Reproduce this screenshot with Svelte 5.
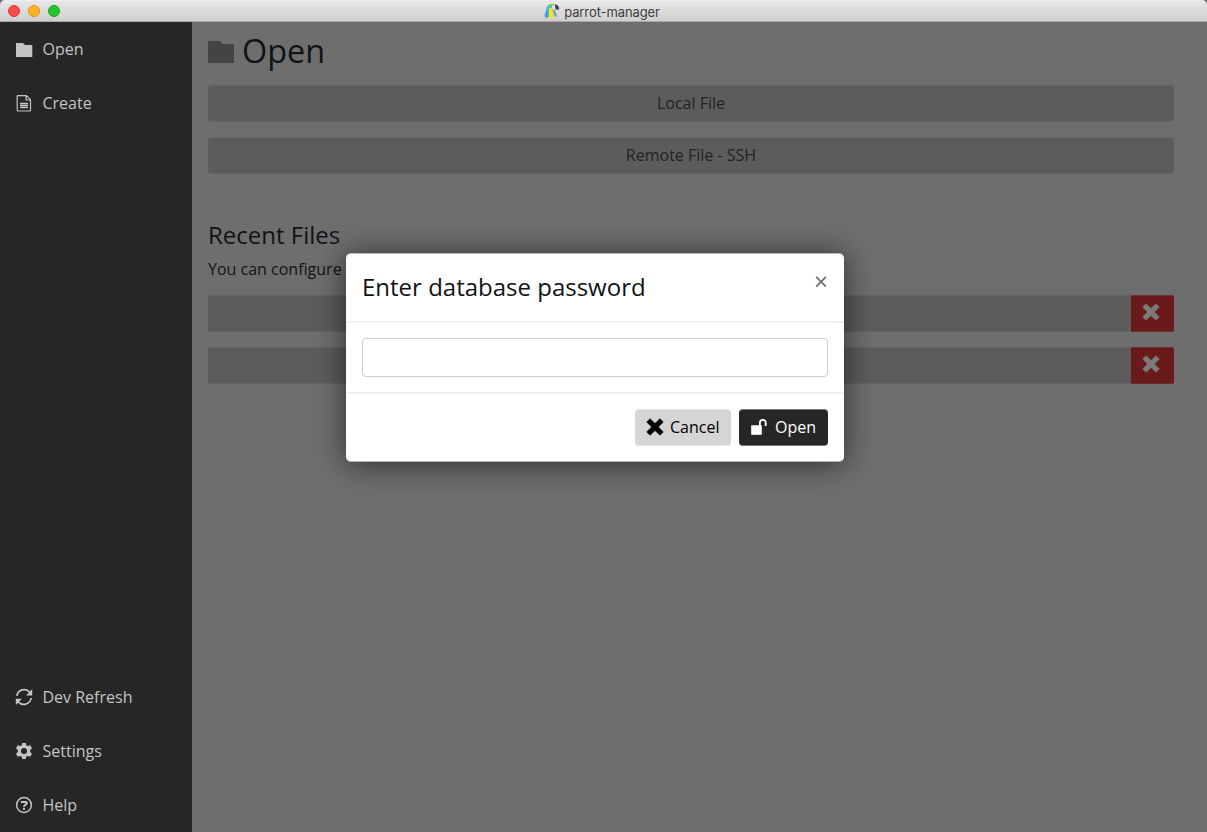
<script>
  const top = [
    { label: 'Open', icon: 'folder' },
    { label: 'Create', icon: 'file' }
  ];
  const bottom = [
    { label: 'Dev Refresh', icon: 'refresh' },
    { label: 'Settings', icon: 'gear' },
    { label: 'Help', icon: 'help' }
  ];
  const sources = ['Local File', 'Remote File - SSH'];
  const recent = [1, 2];
</script>

{#snippet cross(size)}
  <svg width={size} height={size} viewBox="0 0 17 17">
    <path d="M3.8 0.7 8.5 5.2 13.2 0.7 16.3 3.8 11.7 8.5 16.3 13.2 13.2 16.3 8.5 11.8 3.8 16.3 0.7 13.2 5.3 8.5 0.7 3.8Z" fill="currentColor" stroke="currentColor" stroke-width=".6" stroke-linejoin="round" />
  </svg>
{/snippet}

{#snippet glyph(name)}
  <svg class="glyph" width="18" height="18" viewBox="0 0 18 18">
    {#if name === 'folder'}
      <path d="M1 3H8L10 5H17.3V17H1Z" fill="currentColor" />
    {:else if name === 'file'}
      <path d="M3 1.6H11.4L15.5 5.7V16.2Q15.5 17 14.7 17H3Q2.2 17 2.2 16.2V2.4Q2.2 1.6 3 1.6ZM11 2V6H15.3" fill="none" stroke="currentColor" stroke-width="1.2" />
      <path d="M5 9.5H13M5 11.5H13M5 13.5H13" stroke="currentColor" stroke-width="1.3" />
    {:else if name === 'refresh'}
      <path d="M1.9 8A7.3 7.3 0 0 1 14.8 4.3M16.1 10A7.3 7.3 0 0 1 3.2 13.7" fill="none" stroke="currentColor" stroke-width="1.7" />
      <path d="M17.2 1.2V7.4H11ZM.8 17V10.8H7Z" fill="currentColor" />
    {:else if name === 'gear'}
      <path fill="currentColor" fill-rule="evenodd" d="M7.2 1H10.8L11.2 3.2 12.7 4.1 15.2 3.2 17 6.3 15.2 8V10L17 11.7 15.2 14.8 12.7 13.9 11.2 14.8 10.8 17H7.2L6.8 14.8 5.3 13.9 2.8 14.8 1 11.7 2.8 10V8L1 6.3 2.8 3.2 5.3 4.1 6.8 3.2ZM9 6A3 3 0 1 0 9 12 3 3 0 1 0 9 6Z" />
    {:else}
      <circle cx="9" cy="9" r="7.4" fill="none" stroke="currentColor" stroke-width="1.5" />
      <path d="M5.9 5.9H10.5Q11.9 5.9 11.9 7.1 11.9 8 10.6 8.7 9 9.4 9 10.8" fill="none" stroke="currentColor" stroke-width="2" />
      <path d="M7.9 11.8H10V13.8H7.9Z" fill="currentColor" />
    {/if}
  </svg>
{/snippet}

<div class="window">
  <header class="titlebar">
    <div class="lights"><i class="red"></i><i class="yellow"></i><i class="green"></i></div>
    <div class="caption">
      <svg width="16" height="16" viewBox="0 0 16 16">
        <path d="M2 15 0.4 13 3 5 6 1.5 8 4 5 14Z" fill="#33a5e8" />
        <path d="M2.2 5Q4 1 9 1L11 4 6 7 4.5 11Z" fill="#35bce0" />
        <path d="M5 4.2 8 5.5 8.2 15.4 4.8 15.2Z" fill="#ffe21f" />
        <path d="M8 6 10.5 6.5 12.8 12.2 10 14 8 13Z" fill="#f6cf3c" />
        <path d="M9 7 10.5 6.5 12.8 13 11 14Z" fill="#2fa9da" />
        <path d="M4.5 2Q7 0 10.5 1.2L9 3.4Z" fill="#87c83e" />
        <path d="M7.5 3 11 2 12 5.2 9.5 6.6Z" fill="#e7e9ea" />
        <path d="M10.7 1.6Q15 1.5 15.2 6.6L11.6 6.4Z" fill="#46375b" />
      </svg>
      <span>parrot-manager</span>
    </div>
  </header>

  <div class="body">
    <nav>
      <ul>
        {#each top as item}
          <li>{@render glyph(item.icon)}<span>{item.label}</span></li>
        {/each}
      </ul>
      <ul>
        {#each bottom as item}
          <li>{@render glyph(item.icon)}<span>{item.label}</span></li>
        {/each}
      </ul>
    </nav>

    <main>
      <h1>
        <svg width="26" height="22" viewBox="0 0 26 22"><path d="M0 0H12L15 3H26V22H0Z" fill="#434445" /></svg>
        <span>Open</span>
      </h1>
      {#each sources as source}
        <button class="source">{source}</button>
      {/each}
      <h2>Recent Files</h2>
      <p>You can configure</p>
      {#each recent as _}
        <div class="recent">
          <div class="entry"></div>
          <button class="remove" aria-label="Remove">{@render cross(18)}</button>
        </div>
      {/each}
    </main>
  </div>

  <div class="overlay">
    <section class="modal">
      <div class="modal-head">
        <h3>Enter database password</h3>
        <button class="close" aria-label="Close">
          <svg width="12" height="12" viewBox="0 0 12 12"><path d="M1.2.9 10.9 10.6M10.9.9 1.2 10.6" stroke="#6c6c6c" stroke-width="1.7" /></svg>
        </button>
      </div>
      <div class="modal-body"><input type="password" aria-label="Password" /></div>
      <div class="modal-foot">
        <button class="btn cancel">{@render cross(18)}<span>Cancel</span></button>
        <button class="btn open">
          <svg width="17" height="16" viewBox="0 0 17 16">
            <path d="M1.6 6.7H11.4V15.4H1.6Z" fill="#fff" stroke="#fff" stroke-width=".8" stroke-linejoin="round" />
            <path d="M9.9 7.5V3.8Q9.9 0.9 12.8 0.9T15.7 3.8V7" fill="none" stroke="#fff" stroke-width="1.8" />
          </svg>
          <span>Open</span>
        </button>
      </div>
    </section>
  </div>
</div>

<style>
  :global(body) { background: #6e6e6e; }
  * { box-sizing: border-box; }
  .window { width: 1207px; height: 832px; position: relative; overflow: hidden; display: flex; flex-direction: column; font: 16px/24px "Open Sans", sans-serif; color: #111315; background: #6e6e6e; }
  button { font: inherit; color: inherit; border: 0; padding: 0; margin: 0; }
  svg { display: block; flex: none; }
  .titlebar { position: relative; height: 22px; flex: none; display: flex; align-items: center; justify-content: center; background: linear-gradient(#f5f5f5 0, #e7e7e7 1px, #cfcfcf 21px, #a9a9a9 21px); border-radius: 5px 5px 0 0; }
  .lights { position: absolute; left: 8px; top: 5px; display: flex; gap: 8px; }
  .lights i { width: 12px; height: 12px; border-radius: 50%; border: 1px solid; }
  .red { background: #fd4a49; border-color: #e03639 !important; }
  .yellow { background: #fdb225; border-color: #dd971b !important; }
  .green { background: #29c231; border-color: #17a522 !important; }
  .caption { display: flex; align-items: center; gap: 4px; padding-right: 3px; font: 13px/20px Inter, sans-serif; letter-spacing: -.1px; color: #3d3d3d; }
  .caption span { padding-top: 1px; }
  .body { flex: 1; display: flex; min-height: 0; }
  nav { width: 192px; background: #262626; color: #c4c4c4; display: flex; flex-direction: column; justify-content: space-between; }
  ul { list-style: none; margin: 0; padding: 0; }
  li { height: 54px; padding-left: 15px; display: flex; align-items: center; gap: 9.5px; }
  main { flex: 1; padding: 10px 33px 0 16px; }
  h1, h2, h3, p { margin: 0; font-weight: 400; }
  h1 { font-size: 32.4px; line-height: 38px; height: 38px; margin-bottom: 15px; display: flex; align-items: center; gap: 8px; }
  h1 svg { margin-top: 2px; }
  h1 span { margin-top: -2px; }
  .source { display: block; width: 100%; height: 37px; margin-bottom: 15px; border-radius: 4px; background: #5c5c5c; border: solid #646464; border-width: 1px 0; padding-bottom: 1px; color: #222325; }
  h2 { font-size: 24px; line-height: 30px; margin-top: 46px; }
  p { margin: 7px 0 14px; }
  .recent { display: flex; height: 37px; margin-bottom: 15px; }
  .entry { flex: 1; background: #5c5c5c; border: solid #646464; border-width: 1px 0; border-radius: 2px 0 0 2px; }
  .remove { width: 43px; display: flex; align-items: center; justify-content: center; background: #6a1a1a; border: solid #6c3030; border-width: 1px 0; border-radius: 0 2px 2px 0; color: #7b7b7b; padding: 0 3px 3px 0; }
  .overlay { position: absolute; inset: 0; display: flex; justify-content: center; align-items: flex-start; padding: 253px 17px 0 0; }
  .modal { width: 498px; height: 209px; background: #fff; border-radius: 5px; border: solid #b5b5b5; border-width: 1px 0; box-shadow: 0 2px 30px rgba(0, 0, 0, .6); }
  .modal-head { height: 69px; border-bottom: 2px solid #eff0f4; padding: 17px 17px 0 16px; display: flex; justify-content: space-between; align-items: flex-start; }
  h3 { font-size: 24px; line-height: 32px; }
  .close { background: none; margin-top: 5px; }
  .modal-body { height: 71px; border-bottom: 2px solid #eff0f4; padding: 15px 16px; }
  input { display: block; width: 466px; height: 39px; border: 1px solid #c9ced4; border-radius: 4px; background: #fff; }
  .modal-foot { display: flex; justify-content: flex-end; gap: 8px; padding: 15px 16px; }
  .btn { height: 37px; border-radius: 4px; display: flex; align-items: center; padding: 0 12px 2px 11px; }
  .cancel { background: #d5d5d5; color: #000; gap: 6.5px; border: solid #e5e5e5; border-width: 1px 0; }
  .open { background: #262626; color: #fff; gap: 7.5px; border: solid #777; border-width: 1px 0; }
</style>
